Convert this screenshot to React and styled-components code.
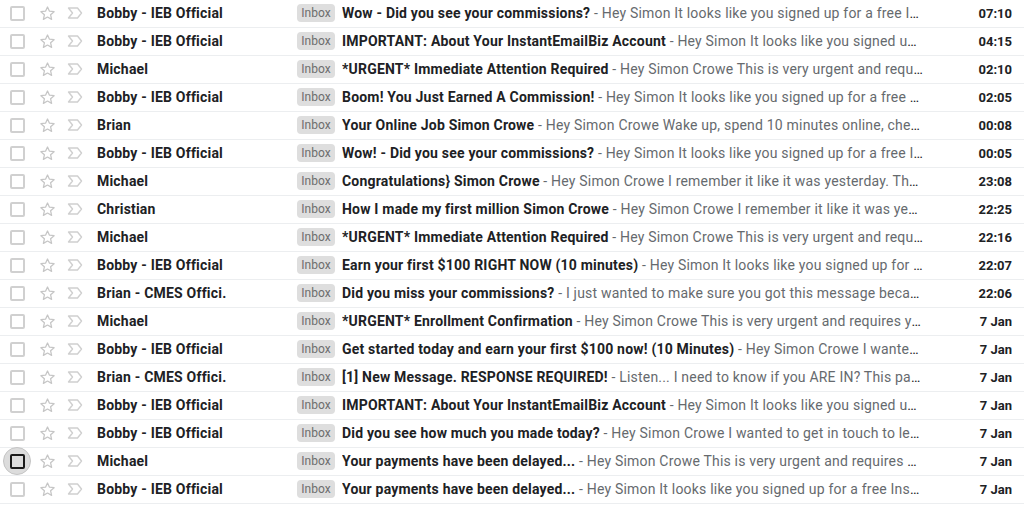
import styled, { createGlobalStyle } from "styled-components";

const GlobalStyle = createGlobalStyle`
  html, body {
    margin: 0;
    padding: 0;
    background: #fff;
  }
  body {
    font-family: Roboto, "Liberation Sans", Arial, sans-serif;
    -webkit-font-smoothing: antialiased;
  }
`;

const emails = [
  { from: "Bobby - IEB Official", subject: "Wow - Did you see your commissions?", snippet: "Hey Simon It looks like you signed up for a free InstantEmailBiz account", time: "07:10" },
  { from: "Bobby - IEB Official", subject: "IMPORTANT: About Your InstantEmailBiz Account", snippet: "Hey Simon It looks like you signed up for a free account", time: "04:15" },
  { from: "Michael", subject: "*URGENT* Immediate Attention Required", snippet: "Hey Simon Crowe This is very urgent and requires your attention", time: "02:10" },
  { from: "Bobby - IEB Official", subject: "Boom! You Just Earned A Commission!", snippet: "Hey Simon It looks like you signed up for a free InstantEmailBiz account", time: "02:05" },
  { from: "Brian", subject: "Your Online Job Simon Crowe", snippet: "Hey Simon Crowe Wake up, spend 10 minutes online, check your account", time: "00:08" },
  { from: "Bobby - IEB Official", subject: "Wow! - Did you see your commissions?", snippet: "Hey Simon It looks like you signed up for a free InstantEmailBiz account", time: "00:05" },
  { from: "Michael", subject: "Congratulations} Simon Crowe", snippet: "Hey Simon Crowe I remember it like it was yesterday. The day I started", time: "23:08" },
  { from: "Christian", subject: "How I made my first million Simon Crowe", snippet: "Hey Simon Crowe I remember it like it was yesterday. The day", time: "22:25" },
  { from: "Michael", subject: "*URGENT* Immediate Attention Required", snippet: "Hey Simon Crowe This is very urgent and requires your attention", time: "22:16" },
  { from: "Bobby - IEB Official", subject: "Earn your first $100 RIGHT NOW (10 minutes)", snippet: "Hey Simon It looks like you signed up for a free account", time: "22:07" },
  { from: "Brian - CMES Offici.", subject: "Did you miss your commissions?", snippet: "I just wanted to make sure you got this message because it matters", time: "22:06" },
  { from: "Michael", subject: "*URGENT* Enrollment Confirmation", snippet: "Hey Simon Crowe This is very urgent and requires your attention", time: "7 Jan" },
  { from: "Bobby - IEB Official", subject: "Get started today and earn your first $100 now! (10 Minutes)", snippet: "Hey Simon Crowe I wanted to get in touch", time: "7 Jan" },
  { from: "Brian - CMES Offici.", subject: "[1] New Message. RESPONSE REQUIRED!", snippet: "Listen... I need to know if you ARE IN? This part is important", time: "7 Jan" },
  { from: "Bobby - IEB Official", subject: "IMPORTANT: About Your InstantEmailBiz Account", snippet: "Hey Simon It looks like you signed up for a free account", time: "7 Jan" },
  { from: "Bobby - IEB Official", subject: "Did you see how much you made today?", snippet: "Hey Simon Crowe I wanted to get in touch to let you know", time: "7 Jan" },
  { from: "Michael", subject: "Your payments have been delayed...", snippet: "Hey Simon Crowe This is very urgent and requires your attention", time: "7 Jan", hovered: true },
  { from: "Bobby - IEB Official", subject: "Your payments have been delayed...", snippet: "Hey Simon It looks like you signed up for a free InstantEmailBiz account", time: "7 Jan" },
];

function StarIcon() {
  return (
    <svg width="17" height="17" viewBox="0 0 24 24" fill="none" stroke="#c6c6c6" strokeWidth="1.8" strokeLinejoin="round">
      <path d="M12 2.8l2.8 6 6.5.7-4.9 4.4 1.4 6.4L12 17l-5.8 3.3 1.4-6.4-4.9-4.4 6.5-.7z" />
    </svg>
  );
}

function ImportanceIcon() {
  return (
    <svg width="16" height="14" viewBox="0 0 16 14" fill="none" stroke="#cfcfcf" strokeWidth="1.4" strokeLinejoin="round">
      <path d="M1.5 2h9l4 5-4 5h-9l4-5z" />
    </svg>
  );
}

function App() {
  return (
    <>
      <GlobalStyle />
      <List>
        {emails.map((email, i) => (
          <Row key={i}>
            <CheckCell $hovered={email.hovered}>
              <Checkbox $hovered={email.hovered} />
            </CheckCell>
            <StarCell>
              <StarIcon />
            </StarCell>
            <ImportantCell>
              <ImportanceIcon />
            </ImportantCell>
            <Sender>{email.from}</Sender>
            <Label>Inbox</Label>
            <Preview>
              <Subject>{email.subject}</Subject>
              <Snippet> - {email.snippet}</Snippet>
            </Preview>
            <Time>{email.time}</Time>
          </Row>
        ))}
      </List>
    </>
  );
}

const List = styled.div`
  display: flex;
  flex-direction: column;
  width: 1024px;
`;

const Row = styled.div`
  display: flex;
  align-items: center;
  height: 28px;
  box-sizing: border-box;
  padding-bottom: 1px;
  border-bottom: 1px solid #eceef0;
  font-size: 14px;
  letter-spacing: 0.2px;
  color: #202124;
`;

const CheckCell = styled.div`
  flex: none;
  width: 28px;
  height: 28px;
  margin-left: 3px;
  display: flex;
  align-items: center;
  justify-content: center;
  border-radius: 50%;
  box-sizing: border-box;
  background: ${(props) => (props.$hovered ? "#dcdcdc" : "transparent")};
  border: ${(props) => (props.$hovered ? "1px solid #c4c4c4" : "none")};
`;

const Checkbox = styled.div`
  width: 15px;
  height: 15px;
  box-sizing: border-box;
  border-radius: 2px;
  border: 2px solid ${(props) => (props.$hovered ? "#1a1a1a" : "#d0d0d0")};
`;

const StarCell = styled.div`
  flex: none;
  width: 32px;
  display: flex;
  justify-content: center;
  align-items: center;
`;

const ImportantCell = styled.div`
  flex: none;
  width: 24px;
  display: flex;
  justify-content: center;
  align-items: center;
`;

const Sender = styled.div`
  flex: none;
  width: 210px;
  box-sizing: border-box;
  padding-left: 10px;
  padding-right: 8px;
  font-weight: 700;
  white-space: nowrap;
  overflow: hidden;
`;

const Label = styled.span`
  flex: none;
  display: inline-flex;
  align-items: center;
  justify-content: center;
  width: 38px;
  height: 18px;
  border-radius: 4px;
  background: #dedede;
  color: #6d6d6d;
  font-size: 12px;
  letter-spacing: 0;
  margin-right: 7px;
`;

const Preview = styled.div`
  flex: 1;
  min-width: 0;
  white-space: nowrap;
  overflow: hidden;
  text-overflow: ellipsis;
`;

const Subject = styled.span`
  font-weight: 700;
  color: #202124;
`;

const Snippet = styled.span`
  color: #666a6e;
`;

const Time = styled.div`
  flex: none;
  width: 101px;
  box-sizing: border-box;
  padding-right: 12px;
  text-align: right;
  font-size: 13px;
  letter-spacing: 0;
  font-weight: 700;
  color: #202124;
`;

export default App;
